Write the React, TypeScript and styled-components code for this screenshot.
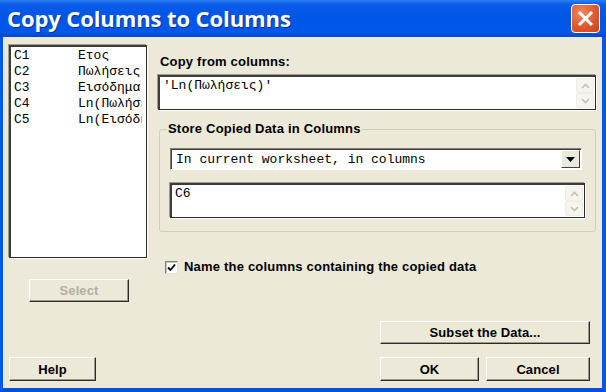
import styled, { createGlobalStyle } from "styled-components";

const GlobalStyle = createGlobalStyle`
  html, body {
    margin: 0;
    padding: 0;
    background: #0054e3;
  }
  #root {
    width: 606px;
    height: 392px;
  }
`;

const Window = styled.div`
  width: 606px;
  height: 392px;
  display: flex;
  flex-direction: column;
  overflow: hidden;
  font-family: "Liberation Sans", Arial, sans-serif;
`;

const TitleBar = styled.div`
  height: 37px;
  flex: none;
  display: flex;
  align-items: center;
  justify-content: space-between;
  padding: 0 6px 0 7px;
  background: linear-gradient(#2f80f3 0%, #0a5ce9 12%, #0055e5 45%, #0058ea 85%, #0248cc 100%);
`;

const Title = styled.span`
  color: #fff;
  font-family: "Open Sans", "DejaVu Sans", sans-serif;
  font-weight: 700;
  font-size: 22px;
  letter-spacing: -0.1px;
  text-shadow: 1px 1px 0 #0a2f99;
  padding-bottom: 2px;
`;

const CloseButton = styled.div`
  width: 29px;
  height: 29px;
  box-sizing: border-box;
  border: 1px solid #fff;
  border-radius: 4px;
  background: radial-gradient(circle at 35% 30%, #f08a60 0%, #e0582c 55%, #c7431d 100%);
  display: flex;
  align-items: center;
  justify-content: center;
`;

const Frame = styled.div`
  flex: 1;
  display: flex;
  border-left: 3px solid #0058e8;
  border-right: 4px solid #0058e8;
  border-bottom: 4px solid #0050dc;
`;

const Content = styled.div`
  flex: 1;
  display: flex;
  flex-direction: column;
  background: #ece9d8;
  padding: 8px 6px 7px 6px;
`;

const Top = styled.div`
  height: 299px;
  display: flex;
`;

const LeftColumn = styled.div`
  width: 138px;
  display: flex;
  flex-direction: column;
`;

const RightColumn = styled.div`
  width: 438px;
  margin-left: 11px;
  display: flex;
  flex-direction: column;
`;

const sunken = `
  background: #fff;
  box-sizing: border-box;
  border-style: solid;
  border-width: 2px 1px 1px 2px;
  border-color: #3c3c3c #2a2a2a #2a2a2a #3c3c3c;
  box-shadow: -1px -1px 0 #a09d90, 1px 1px 0 #fff;
`;

const ListBox = styled.div`
  ${sunken}
  height: 213px;
  padding: 1px 4px 1px 3px;
  font-family: "Liberation Mono", "Courier New", monospace;
  font-size: 13px;
  line-height: 16px;
  color: #000;
`;

const ListRow = styled.div`
  display: flex;
  white-space: nowrap;
  overflow: hidden;
`;

const Code = styled.span`
  width: 64px;
  flex: none;
`;

const Button = styled.div<{ $width: number; $disabled?: boolean }>`
  width: ${(p) => p.$width}px;
  height: 24px;
  box-sizing: border-box;
  display: flex;
  align-items: center;
  justify-content: center;
  background: #ece9d8;
  border-style: solid;
  border-width: 1px;
  border-color: #fff #2b2b2b #2b2b2b #fff;
  box-shadow: inset -1px -1px 0 #9d9a8c;
  font-weight: 700;
  font-size: 13px;
  letter-spacing: 0.1px;
  color: ${(p) => (p.$disabled ? "#b3b0a2" : "#000")};
`;

const SelectButton = styled(Button)`
  margin: 21px 0 0 20px;
  height: 23px;
`;

const Label = styled.div`
  font-weight: 700;
  font-size: 13px;
  line-height: 16px;
  letter-spacing: 0.2px;
  color: #000;
  margin: 9px 0 0 2px;
`;

const TextBox = styled.div<{ $width?: number }>`
  ${sunken}
  width: ${(p) => (p.$width ? `${p.$width}px` : "100%")};
  height: 35px;
  display: flex;
  font-family: "Liberation Mono", "Courier New", monospace;
  font-size: 13px;
  line-height: 16px;
  color: #000;
`;

const TextValue = styled.div`
  flex: 1;
  padding: 1px 3px;
  white-space: nowrap;
`;

const ScrollColumn = styled.div`
  width: 18px;
  margin: 1px 1px 1px 0;
  display: flex;
  flex-direction: column;
`;

const ScrollArrow = styled.div`
  flex: 1;
  box-sizing: border-box;
  border: 1px solid #eeede6;
  border-radius: 2px;
  background: #f5f4ef;
  display: flex;
  align-items: center;
  justify-content: center;
`;

const GroupBox = styled.div`
  position: relative;
  margin: 19px 0 0 1px;
  height: 103px;
  box-sizing: border-box;
  border: 1px solid #cfcdbf;
  border-radius: 3px;
  padding: 18px 0 0 10px;
  display: flex;
  flex-direction: column;
`;

const Legend = styled.span`
  position: absolute;
  top: -9px;
  left: 7px;
  padding: 0 1px;
  background: #ece9d8;
  font-weight: 700;
  font-size: 13px;
  line-height: 16px;
  letter-spacing: 0.2px;
  color: #000;
`;

const Dropdown = styled.div`
  width: 412px;
  height: 22px;
  box-sizing: border-box;
  display: flex;
  background: #fff;
  border-style: solid;
  border-width: 1px;
  border-color: #7f7d74 #fff #fff #7f7d74;
  box-shadow: inset 1px 1px 0 #404040;
  font-family: "Liberation Mono", "Courier New", monospace;
  font-size: 13px;
`;

const DropValue = styled.div`
  flex: 1;
  display: flex;
  align-items: center;
  padding-left: 5px;
`;

const DropArrow = styled.div`
  width: 19px;
  margin: 1px;
  box-sizing: border-box;
  background: #ece9d8;
  border-style: solid;
  border-width: 1px;
  border-color: #fff #404040 #404040 #fff;
  display: flex;
  align-items: center;
  justify-content: center;
`;

const SecondBox = styled(TextBox)`
  margin-top: 13px;
`;

const CheckRow = styled.div`
  margin: 27px 0 0 7px;
  display: flex;
  align-items: center;
  gap: 6px;
  font-weight: 700;
  font-size: 13px;
  line-height: 16px;
  letter-spacing: 0.2px;
  color: #000;
`;

const CheckBox = styled.div`
  width: 13px;
  height: 13px;
  box-sizing: border-box;
  background: #fff;
  border-style: solid;
  border-width: 1px;
  border-color: #808080 #e4e2d8 #e4e2d8 #808080;
  box-shadow: inset 1px 1px 0 #c8c6bb;
  display: flex;
  align-items: center;
  justify-content: center;
`;

const SubsetButton = styled(Button)`
  margin: auto 6px 0 auto;
  height: 23px;
`;

const ButtonRow = styled.div`
  margin-top: 13px;
  padding-right: 6px;
  display: flex;
  gap: 7px;
`;

const Spacer = styled.div`
  flex: 1;
`;

const columns = [
  ["C1", "Ετος"],
  ["C2", "Πωλήσεις"],
  ["C3", "Εισόδημα"],
  ["C4", "Ln(Πωλήσεις)"],
  ["C5", "Ln(Εισόδημα)"],
];

const Chevron = ({ up }: { up?: boolean }) => (
  <svg width="9" height="6" viewBox="0 0 9 6">
    <polyline
      points={up ? "1,5 4.5,1.5 8,5" : "1,1 4.5,4.5 8,1"}
      fill="none"
      stroke="#c3c0b4"
      strokeWidth="1.6"
    />
  </svg>
);

const Scroll = () => (
  <ScrollColumn>
    <ScrollArrow>
      <Chevron up />
    </ScrollArrow>
    <ScrollArrow>
      <Chevron />
    </ScrollArrow>
  </ScrollColumn>
);

export default function App() {
  return (
    <Window>
      <GlobalStyle />
      <TitleBar>
        <Title>Copy Columns to Columns</Title>
        <CloseButton>
          <svg width="17" height="17" viewBox="0 0 17 17">
            <path d="M3 3 L14 14 M14 3 L3 14" stroke="#fff" strokeWidth="3" strokeLinecap="square" />
          </svg>
        </CloseButton>
      </TitleBar>
      <Frame>
        <Content>
          <Top>
            <LeftColumn>
              <ListBox>
                {columns.map(([code, name]) => (
                  <ListRow key={code}>
                    <Code>{code}</Code>
                    <span>{name}</span>
                  </ListRow>
                ))}
              </ListBox>
              <SelectButton $width={100} $disabled>
                Select
              </SelectButton>
            </LeftColumn>
            <RightColumn>
              <Label>Copy from columns:</Label>
              <TextBox style={{ marginTop: 5 }}>
                <TextValue>'Ln(Πωλήσεις)'</TextValue>
                <Scroll />
              </TextBox>
              <GroupBox>
                <Legend>Store Copied Data in Columns</Legend>
                <Dropdown>
                  <DropValue>In current worksheet, in columns</DropValue>
                  <DropArrow>
                    <svg width="9" height="5" viewBox="0 0 9 5">
                      <polygon points="0,0 9,0 4.5,5" fill="#000" />
                    </svg>
                  </DropArrow>
                </Dropdown>
                <SecondBox $width={415}>
                  <TextValue>C6</TextValue>
                  <Scroll />
                </SecondBox>
              </GroupBox>
              <CheckRow>
                <CheckBox>
                  <svg width="9" height="9" viewBox="0 0 9 9">
                    <polyline points="1,4.5 3.5,7 8,1.5" fill="none" stroke="#000" strokeWidth="1.8" />
                  </svg>
                </CheckBox>
                Name the columns containing the copied data
              </CheckRow>
              <SubsetButton $width={210}>Subset the Data...</SubsetButton>
            </RightColumn>
          </Top>
          <ButtonRow>
            <Button $width={87}>Help</Button>
            <Spacer />
            <Button $width={99}>OK</Button>
            <Button $width={104}>Cancel</Button>
          </ButtonRow>
        </Content>
      </Frame>
    </Window>
  );
}
